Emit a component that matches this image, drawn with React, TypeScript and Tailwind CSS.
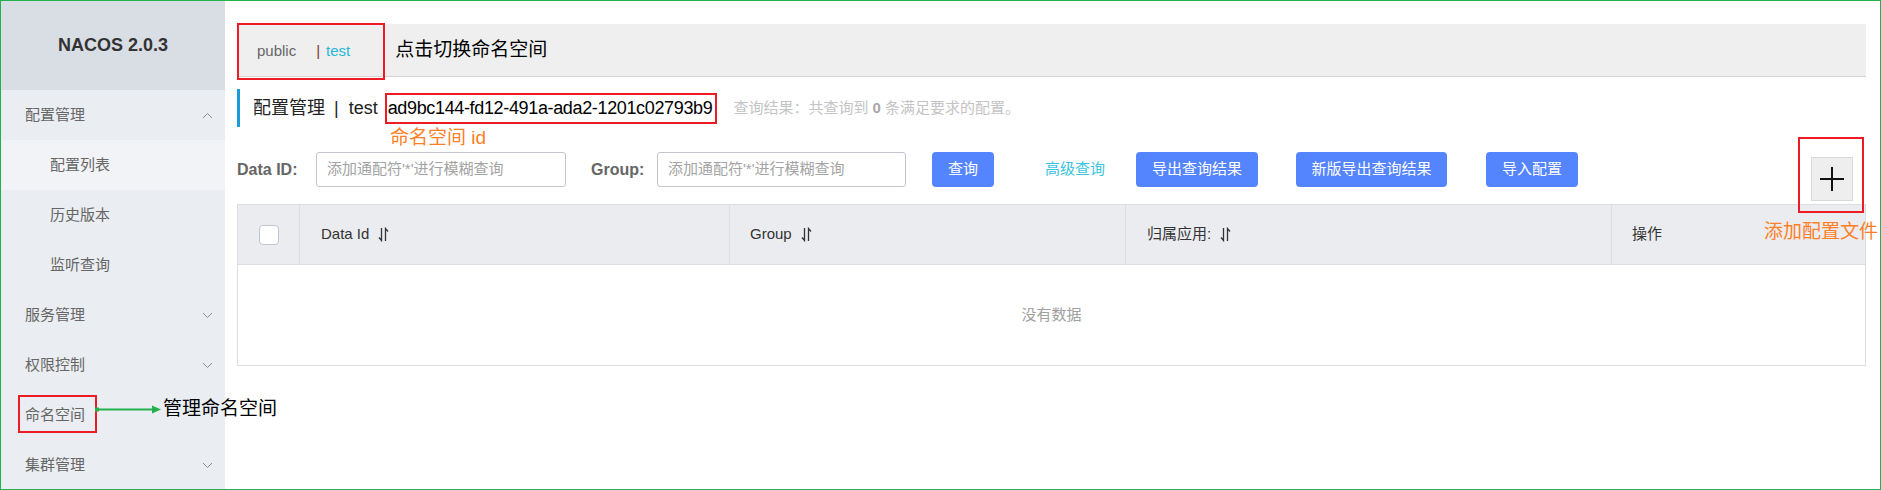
import React from 'react';

const menu = [
  { label: '配置管理', level: 1, chevron: 'up' },
  { label: '配置列表', level: 2, active: true },
  { label: '历史版本', level: 2 },
  { label: '监听查询', level: 2 },
  { label: '服务管理', level: 1, chevron: 'down' },
  { label: '权限控制', level: 1, chevron: 'down' },
  { label: '命名空间', level: 1 },
  { label: '集群管理', level: 1, chevron: 'down' },
];

function Chevron({ dir }: { dir: string }) {
  return (
    <svg width="11" height="7" viewBox="0 0 11 7" fill="none" stroke="#8c8c8c" strokeWidth="1">
      {dir === 'up' ? <path d="M1 6 L5.5 1.5 L10 6" /> : <path d="M1 1 L5.5 5.5 L10 1" />}
    </svg>
  );
}

function SortIcon() {
  return (
    <svg width="11" height="15" viewBox="0 0 11 15" fill="none" stroke="#333" strokeWidth="1.3" className="ml-[9px]">
      <path d="M3.5 1 V13.5 L1 10.5" />
      <path d="M7.5 14 V1.5 L10 4.5" />
    </svg>
  );
}

function Button({ children, w }: { children: React.ReactNode; w: string }) {
  return (
    <div className={`${w} h-[35px] rounded-[4px] bg-[#5584ff] text-white text-[15px] flex items-center justify-center shrink-0`}>
      {children}
    </div>
  );
}

function SearchInput({ w }: { w: string }) {
  return (
    <div className={`${w} h-[35px] border border-[#c4c6cf] rounded-[3px] px-[10px] flex items-center text-[15px] text-[#a3a3a3] shrink-0`}>
      添加通配符'*'进行模糊查询
    </div>
  );
}

export default function App() {
  return (
    <div className="relative w-[1881px] h-[490px] border border-[#22b14c] bg-white flex overflow-hidden font-['Liberation_Sans','Noto_Sans_CJK_SC',sans-serif]">
      <aside className="w-[224px] shrink-0 bg-[#eaedf1] flex flex-col">
        <div className="h-[89px] shrink-0 bg-[#d9dde4] flex items-center justify-center text-[18px] font-bold text-[#333]">
          NACOS 2.0.3
        </div>
        {menu.map((m) => (
          <div
            key={m.label}
            className={`h-[50px] shrink-0 flex items-center justify-between pr-[12px] text-[15px] text-[#666] ${
              m.level === 1 ? 'pl-[24px]' : 'pl-[49px]'
            } ${m.active ? 'bg-[#f2f3f7]' : ''}`}
          >
            <span>{m.label}</span>
            {m.chevron && <Chevron dir={m.chevron} />}
          </div>
        ))}
      </aside>

      <main className="flex-1 min-w-0 pl-[12px] pr-[14px] pt-[23px]">
        <div className="h-[53px] bg-[#efefef] border-b border-[#d4d4d4] flex items-center pl-[20px]">
          <span className="text-[15px] text-[#666] mt-[3px]">public</span>
          <span className="ml-[20px] text-[15px] text-[#7a3b1e] mt-[3px]">|</span>
          <span className="ml-[6px] text-[15px] text-[#2ab7d9] mt-[3px]">test</span>
          <span className="ml-[45px] text-[19px] text-black">点击切换命名空间</span>
        </div>

        <div className="mt-[12px] h-[38px] border-l-[3px] border-[#1a9ad6] pl-[13px] flex items-center">
          <span className="text-[18px] text-[#222]">配置管理</span>
          <span className="text-[18px] text-[#222] ml-[9px]">|</span>
          <span className="text-[18px] text-[#222] ml-[10px]">test</span>
          <span className="ml-[7px] h-[31px] border-2 border-[#ed1c24] pl-[1px] pr-[3px] flex items-center text-[18px] text-black tracking-[-0.35px]">
            ad9bc144-fd12-491a-ada2-1201c02793b9
          </span>
          <span className="ml-[16px] text-[15px] text-[#c4c4c4]">
            查询结果：共查询到 <b className="text-[#a8a8a8]">0</b> 条满足要求的配置。
          </span>
        </div>

        <div className="mt-[25px] h-[35px] flex items-center">
          <span className="w-[79px] shrink-0 text-[16px] font-bold text-[#666]">Data ID:</span>
          <SearchInput w="w-[250px]" />
          <span className="ml-[25px] w-[66px] shrink-0 text-[16px] font-bold text-[#666]">Group:</span>
          <SearchInput w="w-[249px]" />
          <div className="ml-[26px]">
            <Button w="w-[62px]">查询</Button>
          </div>
          <span className="ml-[51px] w-[60px] shrink-0 text-[15px] text-[#39c3df]">高级查询</span>
          <div className="ml-[31px]">
            <Button w="w-[122px]">导出查询结果</Button>
          </div>
          <div className="ml-[38px]">
            <Button w="w-[151px]">新版导出查询结果</Button>
          </div>
          <div className="ml-[39px]">
            <Button w="w-[92px]">导入配置</Button>
          </div>
        </div>

        <div className="mt-[17px] border border-[#dcdee3]">
          <div className="h-[60px] bg-[#ebecf0] border-b border-[#dcdee3] grid grid-cols-[61px_430px_396px_486px_1fr] text-[15px] text-[#333]">
            <div className="flex items-center justify-center">
              <div className="w-[20px] h-[20px] bg-white border border-[#c4c6cf] rounded-[4px]" />
            </div>
            <div className="border-l border-[#dcdee3] pl-[21px] flex items-center">
              Data Id
              <SortIcon />
            </div>
            <div className="border-l border-[#dcdee3] pl-[20px] flex items-center">
              Group
              <SortIcon />
            </div>
            <div className="border-l border-[#dcdee3] pl-[21px] flex items-center">
              归属应用:
              <SortIcon />
            </div>
            <div className="border-l border-[#dcdee3] pl-[20px] flex items-center">操作</div>
          </div>
          <div className="h-[100px] flex items-center justify-center text-[15px] text-[#a0a0a0]">没有数据</div>
        </div>
      </main>

      {/* annotations */}
      <div className="absolute left-[236px] top-[22px] w-[148px] h-[57px] border-2 border-[#ed1c24]" />
      <div className="absolute left-[389px] top-[124px] text-[19px] leading-[26px] text-[#ff7f27]">命名空间 id</div>

      <div className="absolute left-[1810px] top-[156px] w-[42px] h-[44px] bg-[#eeeeee] border border-[#d9d9d9] flex items-center justify-center">
        <svg width="26" height="26" viewBox="0 0 26 26" stroke="#111" strokeWidth="2">
          <path d="M13 1 V25 M1 13 H25" />
        </svg>
      </div>
      <div className="absolute left-[1797px] top-[136px] w-[66px] h-[76px] border-2 border-[#ed1c24]" />
      <div className="absolute left-[1763px] top-[218px] text-[19px] leading-[26px] text-[#ff7f27]">添加配置文件</div>

      <div className="absolute left-[17px] top-[394px] w-[79px] h-[38px] border-2 border-[#ed1c24]" />
      <svg className="absolute left-[94px] top-[402px]" width="68" height="12" viewBox="0 0 68 12">
        <rect x="0" y="4.5" width="4" height="4" fill="#22b14c" />
        <path d="M3 6.5 H60" stroke="#22b14c" strokeWidth="2" />
        <path d="M57 2.5 L66 6.5 L57 10.5 Z" fill="#22b14c" />
      </svg>
      <div className="absolute left-[162px] top-[395px] text-[19px] leading-[26px] text-black">管理命名空间</div>
    </div>
  );
}
